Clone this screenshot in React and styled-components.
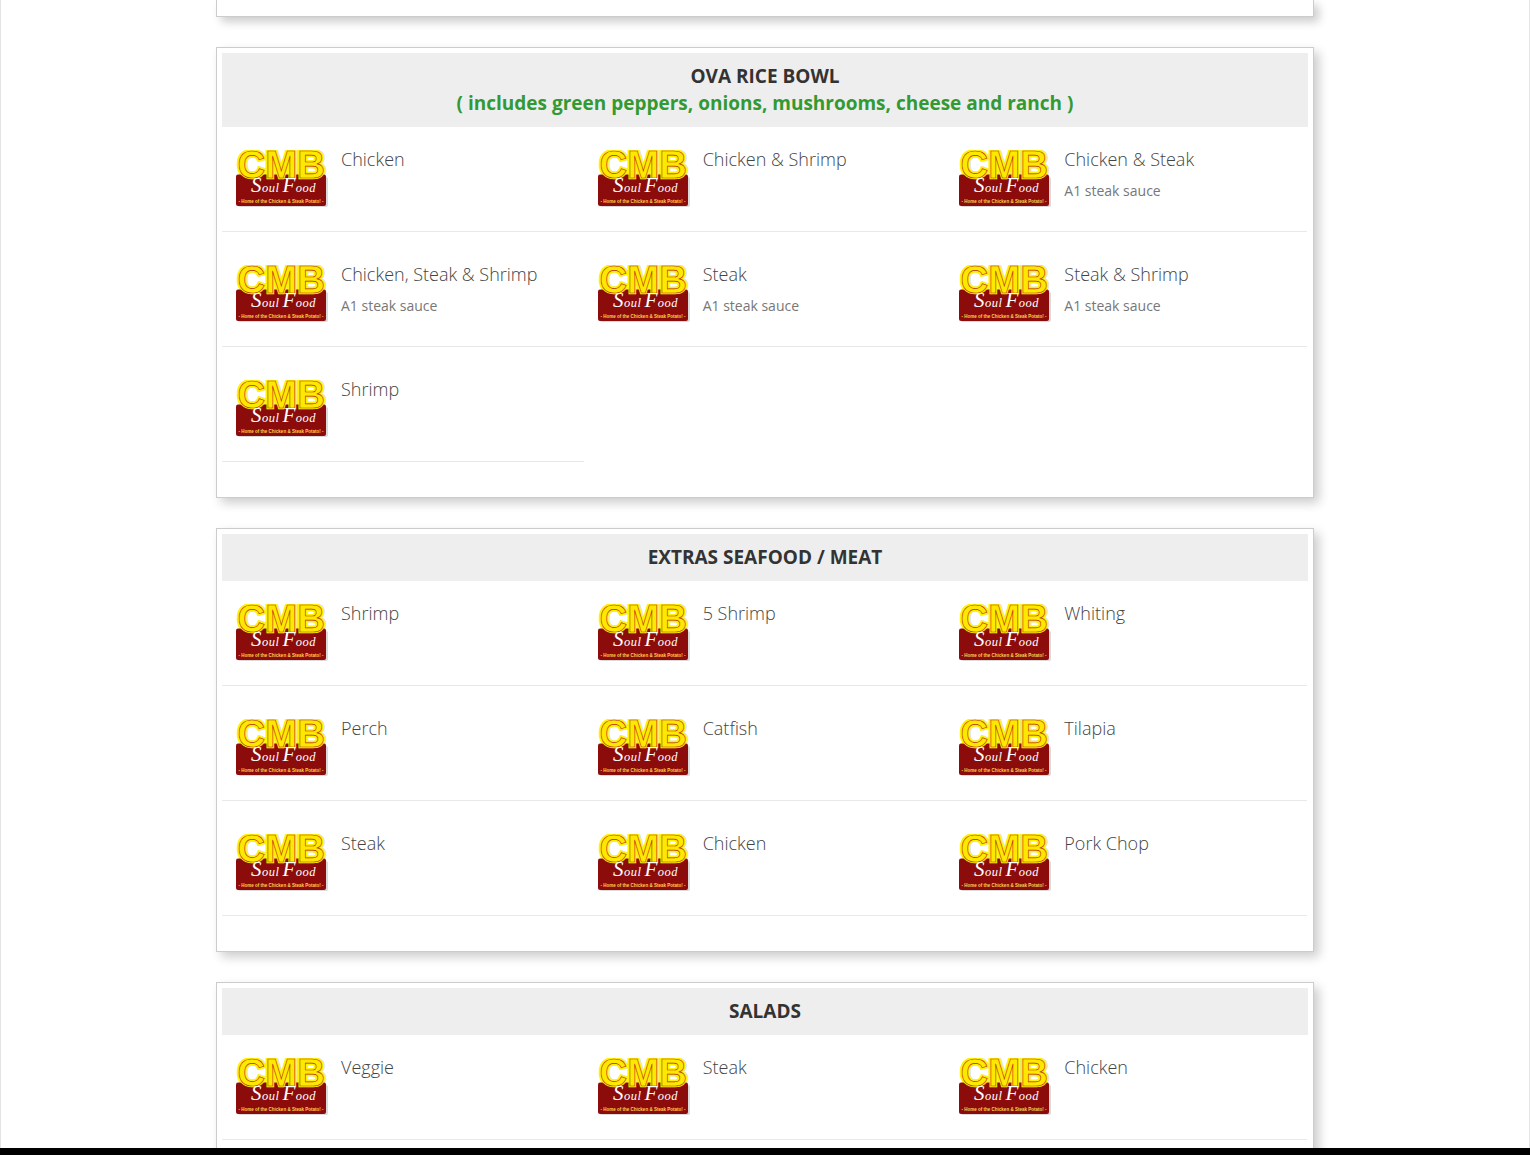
import React from "react";
import styled, { createGlobalStyle } from "styled-components";

const Global = createGlobalStyle`
  html, body { margin: 0; padding: 0; background: #fff; }
  body { font-family: "Open Sans", "Liberation Sans", sans-serif; color: #333; height: 1155px; overflow: hidden; }
`;

const Page = styled.div`
  box-sizing: border-box;
  width: 1530px;
  height: 1155px;
  overflow: hidden;
  border-left: 1px solid #e4e4e4;
  border-right: 1px solid #e4e4e4;
  padding-left: 215px;
`;

const Card = styled.section`
  box-sizing: border-box;
  width: 1098px;
  padding: 5px 5px 35px;
  margin-bottom: 30px;
  background: #fff;
  border: 1px solid #ccc;
  box-shadow: 5px 5px 10px rgba(0, 0, 0, 0.2);
`;

const TopStub = styled(Card)`
  height: 17px;
  padding: 0;
  border-top: none;
`;

const Header = styled.header`
  background: #eee;
  padding: 10px;
  text-align: center;
  font-size: 19px;
  font-weight: 700;
  line-height: 27px;
  color: #333;
  height: ${(p) => (p.$tall ? 74 : 47)}px;
  box-sizing: border-box;
`;

const Green = styled.div`
  color: #339933;
`;

const Grid = styled.div`
  display: grid;
  grid-template-columns: repeat(3, 361.67px);
  row-gap: 10px;
`;

const Item = styled.div`
  box-sizing: border-box;
  height: 105px;
  padding: 23px 14px 0;
  border-bottom: 1px solid #e9e9e9;
  display: flex;
  gap: 13px;
`;

const Info = styled.div`
  margin-top: -1px;
`;

const Name = styled.div`
  font-size: 18px;
  font-weight: 300;
  line-height: 20px;
  white-space: nowrap;
  color: #444;
`;

const Desc = styled.div`
  font-size: 14px;
  line-height: 20px;
  margin-top: 12px;
  color: #777;
  white-space: nowrap;
`;

const LogoSvg = styled.svg`
  flex: none;
  display: block;
  width: 92px;
  height: 58px;
`;

const BottomBar = styled.div`
  position: fixed;
  left: 0;
  right: 0;
  bottom: 0;
  height: 7px;
  background: #000;
`;

const Logo = () => (
  <LogoSvg viewBox="0 0 92 58">
    <rect x="2" y="27" width="90" height="30" rx="2" fill="#bbb" opacity="0.55" />
    <text x="2.3" y="28.4" fontFamily="'Liberation Sans', sans-serif" fontWeight="700" fontSize="38" textLength="87.5" lengthAdjust="spacingAndGlyphs" fill="#c9c9a0" stroke="#c9c9a0" strokeWidth="4" opacity="0.7">
      CMB
    </text>
    <text x="1.5" y="27.6" fontFamily="'Liberation Sans', sans-serif" fontWeight="700" fontSize="38" textLength="87.5" lengthAdjust="spacingAndGlyphs" fill="#fff200" stroke="#fff200" strokeWidth="4" strokeLinejoin="miter">
      CMB
    </text>
    <rect x="0" y="24.5" width="90" height="31.5" rx="2" fill="#8c0c0c" />
    <text x="1.5" y="27.6" fontFamily="'Liberation Sans', sans-serif" fontWeight="700" fontSize="38" textLength="87.5" lengthAdjust="spacingAndGlyphs" fill="#fff200" stroke="#fff200" strokeWidth="2.6" strokeLinejoin="miter">
      CMB
    </text>
    <text x="1.5" y="27.6" fontFamily="'Liberation Sans', sans-serif" fontWeight="700" fontSize="38" textLength="87.5" lengthAdjust="spacingAndGlyphs" fill="#ffe800" stroke="#b5301a" strokeWidth="0.6" strokeLinejoin="miter">
      CMB
    </text>
    <text x="15" y="42" fontFamily="'Liberation Serif', serif" fontStyle="italic" fontSize="12.5" letterSpacing="0.5" fill="#fff">
      <tspan fontSize="21">S</tspan>oul<tspan dx="3" fontSize="21">F</tspan>ood
    </text>
    <text x="45" y="52.5" textAnchor="middle" fontFamily="'Liberation Sans', sans-serif" fontWeight="700" fontSize="5" fill="#ffd24a" textLength="85" lengthAdjust="spacingAndGlyphs">
      - Home of the Chicken &amp; Steak Potato! -
    </text>
  </LogoSvg>
);

const sections = [
  {
    title: "OVA RICE BOWL",
    sub: "( includes green peppers, onions, mushrooms, cheese and ranch )",
    items: [
      ["Chicken"],
      ["Chicken & Shrimp"],
      ["Chicken & Steak", "A1 steak sauce"],
      ["Chicken, Steak & Shrimp", "A1 steak sauce"],
      ["Steak", "A1 steak sauce"],
      ["Steak & Shrimp", "A1 steak sauce"],
      ["Shrimp"],
    ],
  },
  {
    title: "EXTRAS SEAFOOD / MEAT",
    items: [["Shrimp"], ["5 Shrimp"], ["Whiting"], ["Perch"], ["Catfish"], ["Tilapia"], ["Steak"], ["Chicken"], ["Pork Chop"]],
  },
  {
    title: "SALADS",
    items: [["Veggie"], ["Steak"], ["Chicken"]],
  },
];

export default function App() {
  return (
    <Page>
      <Global />
      <TopStub />
      {sections.map((s) => (
        <Card key={s.title}>
          <Header $tall={!!s.sub}>
            {s.title}
            {s.sub && <Green>{s.sub}</Green>}
          </Header>
          <Grid>
            {s.items.map(([name, desc], i) => (
              <Item key={i}>
                <Logo />
                <Info>
                  <Name>{name}</Name>
                  {desc && <Desc>{desc}</Desc>}
                </Info>
              </Item>
            ))}
          </Grid>
        </Card>
      ))}
      <BottomBar />
    </Page>
  );
}
